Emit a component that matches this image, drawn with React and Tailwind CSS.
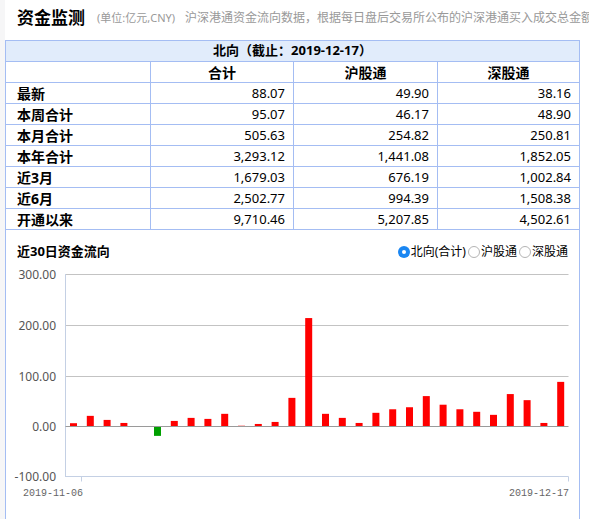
import React from 'react';

const rows = [
  ['最新', '88.07', '49.90', '38.16'],
  ['本周合计', '95.07', '46.17', '48.90'],
  ['本月合计', '505.63', '254.82', '250.81'],
  ['本年合计', '3,293.12', '1,441.08', '1,852.05'],
  ['近3月', '1,679.03', '676.19', '1,002.84'],
  ['近6月', '2,502.77', '994.39', '1,508.38'],
  ['开通以来', '9,710.46', '5,207.85', '4,502.61'],
];

// daily northbound net flow, 2019-11-06 .. 2019-12-17
const flows = [6.5, 21, 13, 7, 0, -18.5, 11, 17, 15, 25, 1.5, 5, 9, 56.5, 214, 25, 17, 7, 27, 34, 38, 60, 43, 34, 29, 23, 64, 52, 7, 88.07];

const font = '"Noto Sans", "Noto Sans CJK SC", sans-serif';

function Radio({ checked, label }) {
  return (
    <label className="flex items-center">
      {checked ? (
        <span className="w-[12px] h-[12px] rounded-full bg-[#1a86f2] flex items-center justify-center">
          <span className="w-[4px] h-[4px] rounded-full bg-white" />
        </span>
      ) : (
        <span className="w-[12px] h-[12px] rounded-full border border-[#b4b4b4] bg-white" />
      )}
      <span className="text-[12px] text-black ml-px">{label}</span>
    </label>
  );
}

function FlowChart() {
  const zero = 164.5;
  const k = 0.5067;
  const grid = [
    [12.5, '300.00'],
    [63.5, '200.00'],
    [114.5, '100.00'],
  ];
  return (
    <svg width="573" height="257" className="block">
      {grid.map(([y, t]) => (
        <g key={t}>
          <line x1="59.5" x2="562.5" y1={y} y2={y} stroke="#c3c3c3" />
          <text x="50" y={y + 4.5} textAnchor="end" fontSize="12" fill="#555" fontFamily={font}>{t}</text>
        </g>
      ))}
      <text x="50" y={zero + 4.5} textAnchor="end" fontSize="12" fill="#555" fontFamily={font}>0.00</text>
      <text x="50" y={214.5 + 4.5} textAnchor="end" fontSize="12" fill="#555" fontFamily={font}>-100.00</text>
      <line x1="59.5" x2="59.5" y1="12" y2="215" stroke="#c4d0e4" />
      {flows.map((v, i) => {
        const h = Math.abs(v) * k;
        return (
          <rect
            key={i}
            x={64 + i * 16.8}
            y={v >= 0 ? zero - h : zero}
            width="7"
            height={h}
            fill={v >= 0 ? '#ff0000' : '#00a000'}
          />
        );
      })}
      <line x1="59.5" x2="562.5" y1={zero} y2={zero} stroke="#9a9a9a" />
      <line x1="59.5" x2="562.5" y1="214.5" y2="214.5" stroke="#c4d0e4" />
      <line x1="75.5" x2="75.5" y1="214.5" y2="219.5" stroke="#c4d0e4" />
      <line x1="562.5" x2="562.5" y1="214.5" y2="219.5" stroke="#c4d0e4" />
      <text x="47" y="234" textAnchor="middle" fontSize="10" fill="#666" fontFamily='"Liberation Mono", monospace'>2019-11-06</text>
      <text x="563" y="234" textAnchor="end" fontSize="10" fill="#666" fontFamily='"Liberation Mono", monospace'>2019-12-17</text>
    </svg>
  );
}

export default function App() {
  return (
    <div
      className="w-[589px] h-[519px] overflow-hidden bg-white flex"
      style={{ fontFamily: font }}
    >
      <div className="w-[5px] shrink-0 bg-[#f6f6f7]" />
      <div className="flex-1 min-w-0">
        <div className="h-[40px] flex items-center pl-[12px] pb-[4px] whitespace-nowrap overflow-hidden">
          <span className="text-[17px] font-bold text-black">资金监测</span>
          <span className="text-[11px] text-[#999] ml-[12px]">(单位:亿元,CNY)</span>
          <span className="text-[12px] text-[#999] ml-[10px]">
            沪深港通资金流向数据，根据每日盘后交易所公布的沪深港通买入成交总金额及卖出成交总金额计算
          </span>
        </div>

        <div className="w-[575px] border border-b-0 border-[#a4bdf3]">
          <div className="h-[21px] border-b border-[#a4bdf3] bg-[#e1ecfb] flex items-center justify-center text-[13px] font-bold text-black">
            北向（截止：2019-12-17）
          </div>
          <div className="grid grid-cols-[145px_143px_144px_1fr] h-[21px] border-b border-[#a4bdf3] text-[14px] font-bold text-black">
            <div className="border-r border-[#a4bdf3]" />
            <div className="border-r border-[#a4bdf3] flex items-center justify-center">合计</div>
            <div className="border-r border-[#a4bdf3] flex items-center justify-center">沪股通</div>
            <div className="flex items-center justify-center">深股通</div>
          </div>
          {rows.map(([label, a, b, c]) => (
            <div key={label} className="grid grid-cols-[145px_143px_144px_1fr] h-[21px] border-b border-[#a4bdf3] text-black">
              <div className="border-r border-[#a4bdf3] flex items-center pl-[11px] text-[14px] font-bold">{label}</div>
              <div className="border-r border-[#a4bdf3] flex items-center justify-end pr-[8px] text-[13px]">{a}</div>
              <div className="border-r border-[#a4bdf3] flex items-center justify-end pr-[8px] text-[13px]">{b}</div>
              <div className="flex items-center justify-end pr-[8px] text-[13px]">{c}</div>
            </div>
          ))}

          <div className="pt-[12px]">
            <div className="h-[20px] flex items-center justify-between pl-[11px] pr-[11px]">
              <span className="text-[13px] font-bold text-black">近30日资金流向</span>
              <div className="flex items-center gap-[2px]">
                <Radio checked label="北向(合计)" />
                <Radio label="沪股通" />
                <Radio label="深股通" />
              </div>
            </div>
            <FlowChart />
          </div>
        </div>
      </div>
    </div>
  );
}
